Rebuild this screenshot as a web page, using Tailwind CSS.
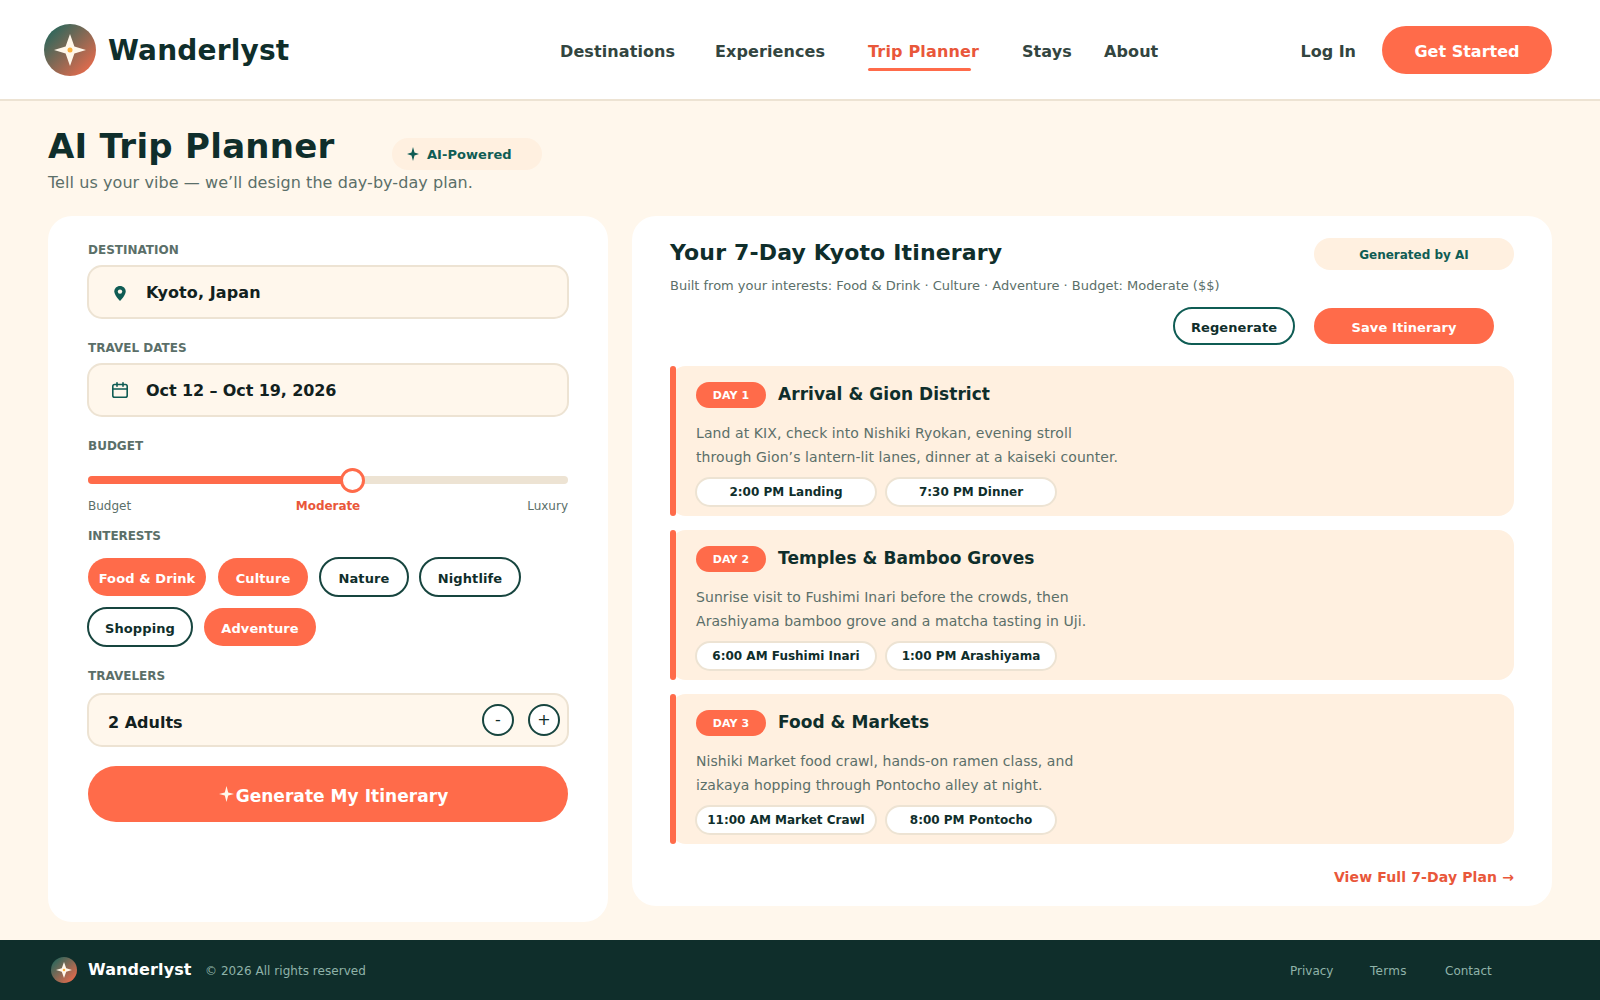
<!DOCTYPE html>
<html lang="en">
<head>
  <meta charset="UTF-8">
  <meta name="viewport" content="width=device-width, initial-scale=1.0">
  <title>Wanderlyst – AI Trip Planner</title>
  <script src="https://cdn.jsdelivr.net/npm/@tailwindcss/browser@4"></script>
</head>
<body class="bg-[#fff7ec] font-['DejaVu_Sans',sans-serif] text-[#0f2e2b]">
  <div class="flex h-[1000px] w-[1600px] flex-col overflow-hidden">

    <!-- Header -->
    <header class="flex h-[101px] shrink-0 items-start border-b-2 border-[#ede3d3] bg-white pr-12 pl-11">
      <a class="mt-6 flex h-[52px] w-[516px] items-center gap-3">
        <svg class="size-[52px]" viewBox="0 0 52 52">
          <defs>
            <linearGradient id="logo" x1="0" y1="0" x2="1" y2="1">
              <stop offset="0" stop-color="#1f665c"/>
              <stop offset="0.15" stop-color="#35675b"/>
              <stop offset="1" stop-color="#ff6b4a"/>
            </linearGradient>
          </defs>
          <circle cx="26" cy="26" r="26" fill="url(#logo)"/>
          <path d="M26 10 L30.4 22.4 L42 26 L30.4 29.6 L26 42 L21.6 29.6 L10 26 L21.6 22.4 Z" fill="#fff7ea"/>
          <circle cx="26" cy="26" r="2.5" fill="#fbb13c"/>
        </svg>
        <span class="pt-[2px] text-[28px] leading-[50px] font-bold tracking-[0.2px]">Wanderlyst</span>
      </a>
      <nav class="mt-[40px] flex text-base leading-6 font-bold tracking-[0.1px] text-[#33453f]">
        <a class="w-[155px]">Destinations</a>
        <a class="w-[153px]">Experiences</a>
        <a class="w-[154px] tracking-[0.17px] text-[#e9573a]">Trip Planner
          <span class="mt-[4px] block h-[3px] w-[103px] rounded-full bg-[#ff6b4a]"></span>
        </a>
        <a class="w-[82px]">Stays</a>
        <a>About</a>
      </nav>
      <div class="mt-[26px] ml-auto flex items-center text-base font-bold">
        <a class="mr-[26px] pt-[4px] text-[#33453f]">Log In</a>
        <button class="h-12 w-[170px] rounded-full bg-[#ff6b4a] pt-[4px] text-white">Get Started</button>
      </div>
    </header>

    <!-- Page title -->
    <section class="h-[115px] shrink-0 px-12 pt-[25px]">
      <div class="flex h-[44px] items-start">
        <h1 class="w-[344px] text-[34px] leading-[40px] font-bold tracking-[0.27px]">AI Trip Planner</h1>
        <div class="mt-3 flex h-8 w-[150px] items-center rounded-full bg-[#fff0e0] pl-[15px] text-[#0f5c54]">
          <svg class="h-3.5 w-3" viewBox="0 0 12 14" fill="currentColor"><path d="M6 0 L7.5 5.5 L12 7 L7.5 8.5 L6 14 L4.5 8.5 L0 7 L4.5 5.5 Z"/></svg>
          <span class="ml-[8px] pt-px text-[13px] font-bold tracking-[0.05px]">AI-Powered</span>
        </div>
      </div>
      <p class="mt-px text-base leading-6 tracking-[0.07px] text-[#5b6f69]">Tell us your vibe — we’ll design the day-by-day plan.</p>
    </section>

    <main class="flex flex-1 items-start gap-6 px-12">
      <!-- Trip form -->
      <section class="h-[706px] w-[560px] rounded-3xl bg-white px-[39px] pt-[25px]">
        <label class="ml-px block text-xs leading-[18px] font-bold text-[#5b6f69]">DESTINATION</label>
        <div class="mt-[6px] flex h-[54px] items-center rounded-[15px] border-2 border-[#ede3d3] bg-[#fff7ec] pl-[25px]">
          <svg class="mt-[3px] h-[15px] w-[12px]" viewBox="0 0 12 15"><path d="M6 0 C2.7 0 .3 2.4 .3 5.5 C.3 9.3 6 15 6 15 C6 15 11.7 9.3 11.7 5.5 C11.7 2.4 9.3 0 6 0 Z" fill="#0f5c54"/><circle cx="6" cy="5.6" r="2.2" fill="#fff7ec"/></svg>
          <span class="ml-5 pt-[2px] text-base font-bold tracking-[0.1px] text-[#12211e]">Kyoto, Japan</span>
        </div>

        <label class="mt-[20px] ml-px block text-xs leading-[18px] font-bold text-[#5b6f69]">TRAVEL DATES</label>
        <div class="mt-[6px] flex h-[54px] items-center rounded-[15px] border-2 border-[#ede3d3] bg-[#fff7ec] pl-[23px]">
          <svg class="size-4" viewBox="0 0 16 16" fill="none" stroke="#0f5c54" stroke-width="1.6" stroke-linecap="round"><rect x=".8" y="2.5" width="14.4" height="12.7" rx="1.8"/><path d="M.8 7h14.4M5 .8v3.4M11 .8v3.4"/></svg>
          <span class="ml-[18px] pt-[2px] text-base font-bold tracking-[-0.1px] text-[#12211e]">Oct 12 – Oct 19, 2026</span>
        </div>

        <label class="mt-[20px] ml-px block text-xs leading-[18px] font-bold text-[#5b6f69]">BUDGET</label>
        <div class="mx-px mt-[12px] flex h-[25px] items-center">
          <div class="relative h-2 w-full rounded-full bg-[#ede3d3]">
            <div class="h-2 w-[264px] rounded-full bg-[#ff6b4a]"></div>
            <div class="absolute top-[-8px] left-[251.5px] size-[25px] rounded-full border-3 border-[#ff6b4a] bg-white"></div>
          </div>
        </div>
        <div class="mx-px mt-[5px] flex justify-between text-xs leading-[18px] text-[#5b6f69]">
          <span class="w-[100px]">Budget</span>
          <span class="font-bold tracking-[-0.05px] text-[#e9573a]">Moderate</span>
          <span class="w-[100px] text-right">Luxury</span>
        </div>

        <label class="mt-[12px] ml-px block text-xs leading-[18px] font-bold tracking-[-0.1px] text-[#5b6f69]">INTERESTS</label>
        <div class="mx-px mt-[13px] flex flex-wrap gap-x-3 gap-y-3 text-[13px] font-bold tracking-[0.1px]">
          <button class="h-[38px] w-[118px] rounded-full bg-[#ff6b4a] pt-[3px] text-white">Food &amp; Drink</button>
          <button class="h-[38px] w-[90px] rounded-full bg-[#ff6b4a] pt-[3px] text-white">Culture</button>
          <button class="-m-px h-[40px] w-[90px] rounded-full border-2 border-[#17453f] pt-[3px]">Nature</button>
          <button class="-m-px h-[40px] w-[102px] rounded-full border-2 border-[#17453f] pt-[3px]">Nightlife</button>
          <button class="-m-px h-[40px] w-[106px] rounded-full border-2 border-[#17453f] pt-[3px]">Shopping</button>
          <button class="h-[38px] w-[112px] rounded-full bg-[#ff6b4a] pt-[3px] text-white">Adventure</button>
        </div>

        <label class="mt-[21px] ml-px block text-xs leading-[18px] font-bold text-[#5b6f69]">TRAVELERS</label>
        <div class="mt-2 flex h-[54px] items-center rounded-[15px] border-2 border-[#ede3d3] bg-[#fff7ec] pr-[7px] pl-[19px]">
          <span class="pt-[5px] text-base font-bold text-[#12211e]">2 Adults</span>
          <button class="ml-auto size-8 rounded-full border-2 border-[#17453f] bg-white text-base leading-7">-</button>
          <button class="ml-[14px] size-8 rounded-full border-2 border-[#17453f] bg-white text-base leading-7">+</button>
        </div>

        <button class="mx-px mt-[19px] flex h-14 w-[480px] items-center justify-center gap-[2px] rounded-full bg-[#ff6b4a] pl-[11px] text-[17px] font-bold tracking-[0.05px] text-white">
          <svg class="h-4 w-[15px]" viewBox="0 0 15 16" fill="#fff7ea"><path d="M7.5 0 L9.2 6.4 L15 8 L9.2 9.6 L7.5 16 L5.8 9.6 L0 8 L5.8 6.4 Z"/></svg>
          <span class="pt-[5px]">Generate My Itinerary</span>
        </button>
      </section>

      <!-- Itinerary -->
      <section class="h-[690px] w-[920px] rounded-3xl bg-white px-[38px] pt-[22px]">
        <div class="flex h-8 items-start justify-between">
          <h2 class="pt-px text-[22px] leading-[28px] font-bold tracking-[0.16px]">Your 7-Day Kyoto Itinerary</h2>
          <span class="h-8 w-[200px] rounded-full bg-[#fff0e0] pt-px text-center text-xs leading-8 font-bold text-[#0f5c54]">Generated by AI</span>
        </div>
        <p class="mt-[6px] text-[13px] leading-5 tracking-[-0.012px] text-[#5b6f69]">Built from your interests: Food &amp; Drink · Culture · Adventure · Budget: Moderate ($$)</p>
        <div class="mt-[11px] mr-5 flex justify-end gap-[19px] text-[13px] font-bold tracking-[0.1px]">
          <button class="h-[38px] w-[122px] rounded-full border-2 border-[#0f5c54] pt-[3px]">Regenerate</button>
          <button class="my-px h-9 w-[180px] rounded-full bg-[#ff6b4a] pt-[3px] text-white">Save Itinerary</button>
        </div>

        <div class="mt-[21px] flex flex-col gap-[14px]">
          <article class="relative h-[150px] rounded-2xl bg-[#fff0e0] pt-4 pl-[26px]">
            <span class="absolute top-0 left-0 h-full w-[6px] rounded-full bg-[#ff6b4a]"></span>
            <div class="flex h-[26px] items-start gap-3">
              <span class="h-[26px] w-[70px] rounded-full bg-[#ff6b4a] text-center text-[11px] leading-[28px] font-bold tracking-[0.1px] text-white">DAY 1</span>
              <h3 class="text-[17px] leading-6 font-bold tracking-[0.05px]">Arrival &amp; Gion District</h3>
            </div>
            <p class="mt-[13px] text-sm leading-6 tracking-[0.08px] text-[#5b6f69]">Land at KIX, check into Nishiki Ryokan, evening stroll<br>through Gion’s lantern-lit lanes, dinner at a kaiseki counter.</p>
            <div class="-ml-px mt-2 flex gap-2 text-center text-xs leading-[26px] font-bold">
              <span class="h-[30px] w-[182px] rounded-full border-2 border-[#ede3d3] bg-white">2:00 PM Landing</span>
              <span class="h-[30px] w-[172px] rounded-full border-2 border-[#ede3d3] bg-white">7:30 PM Dinner</span>
            </div>
          </article>

          <article class="relative h-[150px] rounded-2xl bg-[#fff0e0] pt-4 pl-[26px]">
            <span class="absolute top-0 left-0 h-full w-[6px] rounded-full bg-[#ff6b4a]"></span>
            <div class="flex h-[26px] items-start gap-3">
              <span class="h-[26px] w-[70px] rounded-full bg-[#ff6b4a] text-center text-[11px] leading-[28px] font-bold tracking-[0.1px] text-white">DAY 2</span>
              <h3 class="text-[17px] leading-6 font-bold tracking-[0.05px]">Temples &amp; Bamboo Groves</h3>
            </div>
            <p class="mt-[13px] text-sm leading-6 tracking-[0.06px] text-[#5b6f69]">Sunrise visit to Fushimi Inari before the crowds, then<br>Arashiyama bamboo grove and a matcha tasting in Uji.</p>
            <div class="-ml-px mt-2 flex gap-2 text-center text-xs leading-[26px] font-bold">
              <span class="h-[30px] w-[182px] rounded-full border-2 border-[#ede3d3] bg-white">6:00 AM Fushimi Inari</span>
              <span class="h-[30px] w-[172px] rounded-full border-2 border-[#ede3d3] bg-white">1:00 PM Arashiyama</span>
            </div>
          </article>

          <article class="relative h-[150px] rounded-2xl bg-[#fff0e0] pt-4 pl-[26px]">
            <span class="absolute top-0 left-0 h-full w-[6px] rounded-full bg-[#ff6b4a]"></span>
            <div class="flex h-[26px] items-start gap-3">
              <span class="h-[26px] w-[70px] rounded-full bg-[#ff6b4a] text-center text-[11px] leading-[28px] font-bold tracking-[0.1px] text-white">DAY 3</span>
              <h3 class="text-[17px] leading-6 font-bold tracking-[0.05px]">Food &amp; Markets</h3>
            </div>
            <p class="mt-[13px] text-sm leading-6 tracking-[0.05px] text-[#5b6f69]">Nishiki Market food crawl, hands-on ramen class, and<br>izakaya hopping through Pontocho alley at night.</p>
            <div class="-ml-px mt-2 flex gap-2 text-center text-xs leading-[26px] font-bold">
              <span class="h-[30px] w-[182px] rounded-full border-2 border-[#ede3d3] bg-white">11:00 AM Market Crawl</span>
              <span class="h-[30px] w-[172px] rounded-full border-2 border-[#ede3d3] bg-white">8:00 PM Pontocho</span>
            </div>
          </article>
        </div>

        <a class="mt-[21px] block text-right text-sm leading-6 font-bold tracking-[0.13px] text-[#e9573a]">View Full 7-Day Plan →</a>
      </section>
    </main>

    <!-- Footer -->
    <footer class="flex h-[60px] shrink-0 items-center bg-[#0f2e2b] pl-[51px] text-xs text-[#8fb3a9]">
      <svg class="size-[26px]" viewBox="0 0 52 52">
        <circle cx="26" cy="26" r="26" fill="url(#logo)"/>
        <path d="M26 10 L30.4 22.4 L42 26 L30.4 29.6 L26 42 L21.6 29.6 L10 26 L21.6 22.4 Z" fill="#fff7ea"/>
        <circle cx="26" cy="26" r="2.5" fill="#fbb13c"/>
      </svg>
      <span class="ml-[11px] w-[117px] text-base font-bold tracking-[0.1px] text-white">Wanderlyst</span>
      <span class="pt-[2px] tracking-[0.04px]">© 2026 All rights reserved</span>
      <nav class="ml-auto flex pt-[2px]">
        <a class="w-[80px]">Privacy</a>
        <a class="w-[75px] tracking-[0.3px]">Terms</a>
        <a class="w-[155px]">Contact</a>
      </nav>
    </footer>
  </div>
</body>
</html>
